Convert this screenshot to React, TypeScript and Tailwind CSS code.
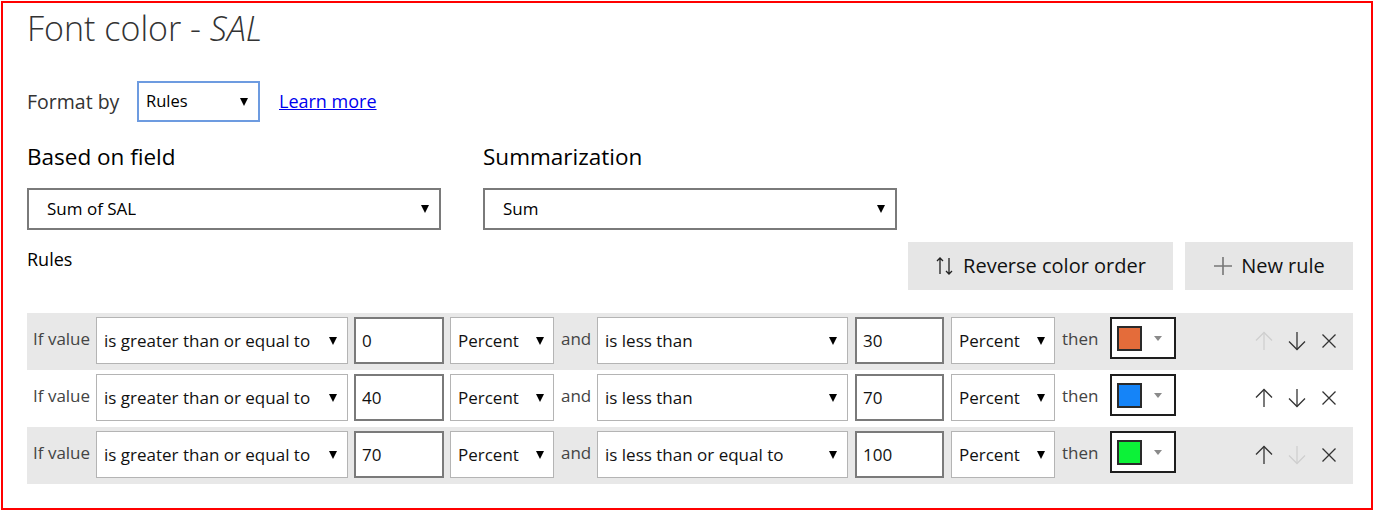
const rules = [
  { op1: 'is greater than or equal to', v1: '0', op2: 'is less than', v2: '30', color: '#e46c3a', up: false, down: true },
  { op1: 'is greater than or equal to', v1: '40', op2: 'is less than', v2: '70', color: '#1584f8', up: true, down: true },
  { op1: 'is greater than or equal to', v1: '70', op2: 'is less than or equal to', v2: '100', color: '#0cf238', up: true, down: false },
];

const font = { fontFamily: '"Open Sans", "Noto Sans", sans-serif' };

function Caret() {
  return <div className="h-0 w-0 shrink-0 border-x-[4px] border-t-[8px] border-x-transparent border-t-black" />;
}

function Dropdown({ label, className }: { label: string; className: string }) {
  return (
    <div className={`flex items-center justify-between bg-white ${className}`}>
      <span className="truncate">{label}</span>
      <Caret />
    </div>
  );
}

function Arrow({ down, on }: { down?: boolean; on: boolean }) {
  return (
    <svg width="18" height="20" viewBox="0 0 18 20" className={on ? 'text-[#333]' : 'text-[#cfcfcf]'}>
      <g fill="none" stroke="currentColor" strokeWidth="1.3" transform={down ? 'rotate(180 9 10)' : undefined}>
        <path d="M9 1.5V19" />
        <path d="M1 9.5L9 1.5L17 9.5" />
      </g>
    </svg>
  );
}

function Cross() {
  return (
    <svg width="16" height="16" viewBox="0 0 16 16" className="text-[#333]">
      <path d="M1.5 1.5L14.5 14.5M14.5 1.5L1.5 14.5" fill="none" stroke="currentColor" strokeWidth="1.3" />
    </svg>
  );
}

function RuleRow({ r, shaded }: { r: (typeof rules)[number]; shaded: boolean }) {
  return (
    <div className={`flex h-[57px] items-start pt-[4px] pl-[6px] ${shaded ? 'bg-[#e8e8e8]' : 'bg-white'}`}>
      <span className="mt-[9px] w-[63px] text-[17px] text-[#444]">If value</span>
      <Dropdown label={r.op1} className="h-[47px] w-[252px] border border-[#b4b4b4] pr-[10px] pl-[7px] text-[17px] text-[#111]" />
      <div className="ml-[6px] flex h-[47px] w-[90px] items-center border-2 border-[#7a7a7a] bg-white pl-[6px] text-[17px] text-[#111]">
        {r.v1}
      </div>
      <Dropdown label="Percent" className="ml-[6px] h-[47px] w-[104px] border border-[#b4b4b4] pr-[9px] pl-[7px] text-[17px] text-[#111]" />
      <span className="mt-[9px] w-[43px] pl-[7px] text-[17px] text-[#444]">and</span>
      <Dropdown label={r.op2} className="h-[47px] w-[251px] border border-[#b4b4b4] pr-[10px] pl-[7px] text-[17px] text-[#111]" />
      <div className="ml-[7px] flex h-[47px] w-[89px] items-center border-2 border-[#7a7a7a] bg-white pl-[6px] text-[17px] text-[#111]">
        {r.v2}
      </div>
      <Dropdown label="Percent" className="ml-[7px] h-[47px] w-[104px] border border-[#b4b4b4] pr-[9px] pl-[7px] text-[17px] text-[#111]" />
      <span className="mt-[9px] w-[55px] pl-[7px] text-[17px] text-[#444]">then</span>
      <div className="flex h-[42px] w-[66px] items-center border-2 border-[#1e1e1e] bg-white pl-[5px]">
        <div className="h-[25px] w-[25px] border-2 border-[#2a2a2a]" style={{ backgroundColor: r.color }} />
        <div className="ml-[12px] h-0 w-0 border-x-[4px] border-t-[5px] border-x-transparent border-t-[#8a8a8a]" />
      </div>
      <div className="mt-[14px] mr-[16px] ml-auto flex items-center gap-[15px]">
        <Arrow on={r.up} />
        <Arrow down on={r.down} />
        <Cross />
      </div>
    </div>
  );
}

export default function App() {
  return (
    <div className="h-[510px] w-[1373px] bg-white p-px" style={font}>
      <div className="h-[509px] w-[1372px] border-2 border-[#ff0000] pl-[24px] pr-[18px]">
        <h1 className="mt-[5px] text-[34px] leading-[40px] font-light text-[#333]">
          Font color - <span className="italic">SAL</span>
        </h1>

        <div className="mt-[33px] flex items-center">
          <span className="w-[110px] text-[19.5px] text-[#333]">Format by</span>
          <Dropdown label="Rules" className="h-[41px] w-[123px] border-2 border-[#6d9be0] pr-[10px] pl-[7px] text-[16.5px] text-black" />
          <a href="#" className="ml-[19px] text-[18px] text-[#0000ee] underline">
            Learn more
          </a>
        </div>

        <div className="mt-[20px] flex gap-[42px]">
          <div>
            <div className="text-[22.5px] leading-[30px] text-black">Based on field</div>
            <Dropdown label="Sum of SAL" className="mt-[16px] h-[42px] w-[414px] border-2 border-[#7a7a7a] pr-[10px] pl-[18px] text-[17px] text-black" />
          </div>
          <div>
            <div className="text-[22.5px] leading-[30px] text-black">Summarization</div>
            <Dropdown label="Sum" className="mt-[16px] h-[42px] w-[414px] border-2 border-[#7a7a7a] pr-[10px] pl-[18px] text-[17px] text-black" />
          </div>
        </div>

        <div className="mt-[12px] flex items-start">
          <span className="mt-[4px] text-[18px] text-black">Rules</span>
          <div className="ml-auto flex gap-[12px]">
            <button className="flex h-[48px] w-[265px] items-center justify-center bg-[#e6e6e6] text-[20px] text-[#111]">
              <svg width="20" height="20" viewBox="0 0 20 20" className="text-[#222]">
                <g fill="none" stroke="currentColor" strokeWidth="1.3">
                  <path d="M5 2V18M2 5L5 2L8 5" />
                  <path d="M14 2V18M11 15L14 18L17 15" />
                </g>
              </svg>
              <span className="ml-[8px]">Reverse color order</span>
            </button>
            <button className="flex h-[48px] w-[168px] items-center justify-center bg-[#e6e6e6] text-[20px] text-[#111]">
              <svg width="20" height="20" viewBox="0 0 20 20" className="text-[#777]">
                <path d="M10 1V19M1 10H19" fill="none" stroke="currentColor" strokeWidth="1.6" />
              </svg>
              <span className="ml-[8px]">New rule</span>
            </button>
          </div>
        </div>

        <div className="mt-[23px] w-[1326px]">
          {rules.map((r, i) => (
            <RuleRow key={i} r={r} shaded={i !== 1} />
          ))}
        </div>
      </div>
    </div>
  );
}
